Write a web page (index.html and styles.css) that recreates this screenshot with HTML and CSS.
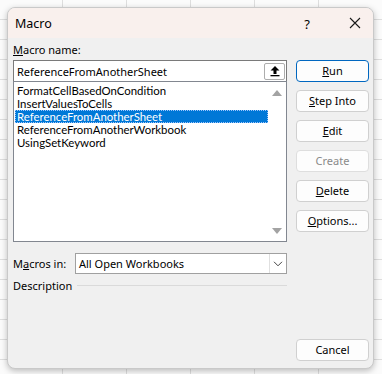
FILE: index.html
```html
<!DOCTYPE html>
<html>
<head>
<meta charset="utf-8">
<link rel="stylesheet" href="styles.css">
</head>
<body>
<div class="sheet">
  <div class="dialog">
    <div class="titlebar">
      <span class="title">Macro</span>
      <span class="help">?</span>
      <svg class="close" width="12" height="12" viewBox="0 0 12 12"><path d="M1 1L11 11M11 1L1 11" stroke="#1a1a1a" stroke-width="1.1" fill="none"/></svg>
    </div>
    <div class="body">
      <div class="left">
        <div class="label"><u>M</u>acro name:</div>
        <div class="namebox">
          <span class="nametext">ReferenceFromAnotherSheet</span>
          <span class="upbtn"><svg width="12" height="12" viewBox="0 0 12 12"><path d="M6 1L1.5 5.5H4.5V9H7.5V5.5H10.5Z" fill="#000"/><rect x="1.5" y="10" width="9" height="1.3" fill="#000"/></svg></span>
        </div>
        <div class="list">
          <div class="items">
            <div class="item">FormatCellBasedOnCondition</div>
            <div class="item">InsertValuesToCells</div>
            <div class="item selected">ReferenceFromAnotherSheet</div>
            <div class="item">ReferenceFromAnotherWorkbook</div>
            <div class="item">UsingSetKeyword</div>
          </div>
          <div class="scroll">
            <svg width="12" height="8" viewBox="0 0 12 8"><path d="M6 1L11 7H1Z" fill="#a3a3a3"/></svg>
            <svg width="12" height="8" viewBox="0 0 12 8"><path d="M1 1H11L6 7Z" fill="#a3a3a3"/></svg>
          </div>
        </div>
        <div class="inrow">
          <span class="label2">M<u>a</u>cros in:</span>
          <div class="select">
            <span class="seltext">All Open Workbooks</span>
            <span class="selbtn"><svg width="10" height="6" viewBox="0 0 10 6"><path d="M1 0.8L5 4.8L9 0.8" stroke="#444" stroke-width="1" fill="none"/></svg></span>
          </div>
        </div>
        <div class="descrow">
          <span class="desc">Description</span>
          <span class="rule"></span>
        </div>
      </div>
      <div class="right">
        <button class="btn default"><u>R</u>un</button>
        <button class="btn"><u>S</u>tep Into</button>
        <button class="btn"><u>E</u>dit</button>
        <button class="btn disabled">Create</button>
        <button class="btn"><u>D</u>elete</button>
        <button class="btn"><u>O</u>ptions...</button>
        <button class="btn cancel">Cancel</button>
      </div>
    </div>
  </div>
</div>
</body>
</html>
```
FILE: styles.css
```css
* { box-sizing: border-box; }
html, body { margin: 0; padding: 0; }
body {
  width: 382px;
  height: 374px;
  overflow: hidden;
  font-family: "Noto Sans", "Liberation Sans", sans-serif;
  color: #000;
}
.sheet {
  width: 382px;
  height: 374px;
  padding: 7px 8px 5px 7px;
  background-color: #fbfbfb;
  background-image:
    linear-gradient(to right, #dedede 1px, transparent 1px),
    linear-gradient(to bottom, #dedede 1px, transparent 1px);
  background-size: 64px 20px, 64px 20px;
  background-position: 62px 0, 0 -1px;
}
.dialog {
  width: 367px;
  height: 362px;
  background: #f0f0f0;
  border-radius: 8px;
  border: 1px solid #c9c9c9;
  box-shadow: 0 2px 6px rgba(0,0,0,0.25);
  overflow: hidden;
  display: flex;
  flex-direction: column;
}
.titlebar {
  height: 30px;
  flex: none;
  background: #f9f0ed;
  display: flex;
  align-items: center;
  padding-left: 7px;
  font-size: 12.5px;
}
.title { flex: 1; margin-top: 1px; }
.help { width: 14px; margin-right: 35px; font-size: 13px; text-align: center; margin-top: 1px; }
.close { margin-right: 12px; }
.body {
  flex: 1;
  display: flex;
  padding: 0 4px 7px 5px;
}
.left {
  width: 274px;
  display: flex;
  flex-direction: column;
}
.label {
  font-size: 11px;
  height: 22px;
  padding-top: 5px;
  line-height: 14px;
}
.namebox {
  height: 21px;
  background: #fff;
  border: 1px solid #7a7a7a;
  border-bottom: none;
  display: flex;
  align-items: center;
  padding-left: 3px;
  padding-right: 1px;
}
.nametext { flex: 1; font-size: 11px; }
.upbtn {
  width: 21px;
  height: 17px;
  border: 1px solid #adadad;
  border-radius: 2px;
  display: flex;
  align-items: center;
  justify-content: center;
  background: #fff;
}
.list {
  height: 161px;
  border: 1px solid #828790;
  background: #fff;
  display: flex;
}
.items { flex: 1; padding: 2px 0 0 1px; }
.item {
  height: 13px;
  line-height: 13px;
  font-family: Lato, "Noto Sans", sans-serif;
  font-size: 11.4px;
  padding-left: 2px;
  white-space: nowrap;
}
.item.selected {
  background: #0078d7;
  color: #fff;
  outline: 1px dotted #9ec6ff;
  outline-offset: -1px;
}
.scroll {
  width: 18px;
  display: flex;
  flex-direction: column;
  justify-content: space-between;
  align-items: center;
  padding: 7px 0 6px;
}
.inrow {
  margin-top: 11px;
  display: flex;
  align-items: center;
  height: 21px;
}
.label2 { width: 62px; font-size: 11px; }
.select {
  flex: 1;
  height: 21px;
  background: #fff;
  border: 1px solid #a0a0a0;
  display: flex;
  align-items: center;
  padding-left: 3px;
}
.seltext { flex: 1; font-size: 11px; }
.selbtn {
  width: 17px;
  height: 19px;
  border-left: 1px solid #e0e0e0;
  display: flex;
  align-items: center;
  justify-content: center;
}
.descrow {
  margin-top: 3px;
  display: flex;
  align-items: center;
  height: 17px;
}
.desc { font-size: 11px; margin-right: 5px; }
.rule { flex: 1; height: 1px; background: #dadada; }
.right {
  width: 73px;
  margin-left: 9px;
  display: flex;
  flex-direction: column;
  gap: 8px;
  padding-top: 22px;
}
.btn {
  height: 22px;
  width: 73px;
  background: #fdfdfd;
  border: 1px solid #d0d0d0;
  border-radius: 4px;
  font-family: "Noto Sans", "Liberation Sans", sans-serif;
  font-size: 11px;
  color: #000;
  padding: 0;
  line-height: 18px;
}
.btn.default { border: 1px solid #0067c0; }
.btn.disabled { color: #8a8a8a; border-color: #dedede; }
.btn.cancel { margin-top: auto; }
```
